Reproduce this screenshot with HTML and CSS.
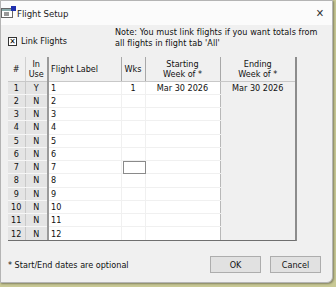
FILE: index.html
```html
<!DOCTYPE html>
<html>
<head>
<meta charset="utf-8">
<link rel="stylesheet" href="styles.css">
</head>
<body>
<div class="window">
  <div class="titlebar">
    <svg class="appicon" width="15" height="13" viewBox="0 0 15 13">
      <rect x="0.5" y="2.5" width="11" height="9" fill="#fff" stroke="#666"/>
      <rect x="1" y="3" width="10" height="2" fill="#8aa"/>
      <rect x="3" y="6" width="5" height="4" fill="#999"/>
      <rect x="10" y="0" width="5" height="5" fill="#1f2fae"/>
    </svg>
    <span class="title">Flight Setup</span>
    <span class="close">✕</span>
  </div>
  <div class="content">
    <div class="toprow">
      <label class="check"><span class="box">✕</span>Link Flights</label>
      <div class="note">Note: You must link flights if you want totals from<br>all flights in flight tab 'All'</div>
    </div>
    <div class="gridwrap">
      <table class="grid">
        <colgroup>
          <col class="c-num"><col class="c-use"><col class="c-lab"><col class="c-wks"><col class="c-st"><col class="c-en">
        </colgroup>
        <thead>
          <tr>
            <th class="hnum">#</th>
            <th class="huse">In<br>Use</th>
            <th class="hlab">Flight Label</th>
            <th>Wks</th>
            <th>Starting<br>Week of *</th>
            <th class="hen">Ending<br>Week of *</th>
          </tr>
        </thead>
        <tbody>
          <tr><td class="num">1</td><td class="use">Y</td><td class="lab">1</td><td class="wks">1</td><td class="st">Mar 30 2026</td><td class="en">Mar 30 2026</td></tr>
          <tr><td class="num">2</td><td class="use">N</td><td class="lab">2</td><td class="wks"></td><td class="st"></td><td class="en"></td></tr>
          <tr><td class="num">3</td><td class="use">N</td><td class="lab">3</td><td class="wks"></td><td class="st"></td><td class="en"></td></tr>
          <tr><td class="num">4</td><td class="use">N</td><td class="lab">4</td><td class="wks"></td><td class="st"></td><td class="en"></td></tr>
          <tr><td class="num">5</td><td class="use">N</td><td class="lab">5</td><td class="wks"></td><td class="st"></td><td class="en"></td></tr>
          <tr><td class="num">6</td><td class="use">N</td><td class="lab">6</td><td class="wks"></td><td class="st"></td><td class="en"></td></tr>
          <tr><td class="num">7</td><td class="use">N</td><td class="lab">7</td><td class="wks"><span class="focus"></span></td><td class="st"></td><td class="en"></td></tr>
          <tr><td class="num">8</td><td class="use">N</td><td class="lab">8</td><td class="wks"></td><td class="st"></td><td class="en"></td></tr>
          <tr><td class="num">9</td><td class="use">N</td><td class="lab">9</td><td class="wks"></td><td class="st"></td><td class="en"></td></tr>
          <tr><td class="num">10</td><td class="use">N</td><td class="lab">10</td><td class="wks"></td><td class="st"></td><td class="en"></td></tr>
          <tr><td class="num">11</td><td class="use">N</td><td class="lab">11</td><td class="wks"></td><td class="st"></td><td class="en"></td></tr>
          <tr><td class="num">12</td><td class="use">N</td><td class="lab">12</td><td class="wks"></td><td class="st"></td><td class="en"></td></tr>
        </tbody>
      </table>
    </div>
    <div class="footer">
      <span class="foot-note">* Start/End dates are optional</span>
      <div class="buttons">
        <button class="btn">OK</button>
        <button class="btn">Cancel</button>
      </div>
    </div>
  </div>
</div>
</body>
</html>
```

FILE: styles.css
```css
* { box-sizing: border-box; }
html, body { margin: 0; padding: 0; }
body {
  width: 336px;
  height: 287px;
  background: #c9c995;
  font-family: "DejaVu Sans Condensed", "DejaVu Sans", sans-serif;
  font-size: 9px;
  color: #111;
  overflow: hidden;
}
.window {
  width: 333px;
  height: 283px;
  background: #f0f0f0;
  border: 1px solid #b4b4b4;
  border-radius: 0 0 6px 0;
  box-shadow: 1px 1px 2px rgba(0,0,0,0.35);
  display: flex;
  flex-direction: column;
}
.titlebar {
  height: 24px;
  background: #fbfbfb;
  display: flex;
  align-items: center;
  padding: 0 8px 0 0;
}
.appicon { margin-top: -2px; }
.title {
  margin-left: 1px;
  font-family: "DejaVu Sans Condensed", "DejaVu Sans", sans-serif;
  font-size: 9.5px;
  color: #222;
}
.close {
  margin-left: auto;
  font-size: 11px;
  color: #333;
}
.content {
  flex: 1;
  display: flex;
  flex-direction: column;
  padding: 2px 0 0 7px;
}
.toprow {
  display: flex;
  height: 30px;
}
.check {
  display: flex;
  align-items: center;
  gap: 4px;
  margin-top: 9px;
  align-self: flex-start;
  height: 10px;
}
.box {
  width: 9px;
  height: 9px;
  border: 1px solid #333;
  background: #fff;
  font-size: 8px;
  font-weight: bold;
  line-height: 7px;
  text-align: center;
  color: #000;
}
.note {
  margin-left: 48px;
  line-height: 11px;
  color: #111;
  letter-spacing: 0.05px;
}
.gridwrap {
  width: 289px;
  border-right: 2px solid #8c8c8c;
  border-bottom: 1px solid #6f6f6f;
  height: 184px;
}
.grid {
  border-collapse: collapse;
  table-layout: fixed;
  width: 287px;
}
.c-num { width: 17px; }
.c-use { width: 23px; }
.c-lab { width: 73px; }
.c-wks { width: 24px; }
.c-st { width: 75px; }
.c-en { width: 75px; }
.grid th {
  height: 24px;
  font-weight: normal;
  background: #f0f0f0;
  border-right: 1px solid #a8a8a8;
  border-bottom: 1px solid #c8c8c8;
  line-height: 10px;
  padding: 0;
  text-align: center;
  vertical-align: middle;
}
.grid th.hnum { border-right-color: #d0d0d0; }
.grid th.huse { border-right: 2px solid #9a9a9a; }
.grid th.hlab { text-align: left; padding-left: 2px; }
.grid th.hen { border-right: none; }
.grid td {
  height: 13.25px;
  padding: 0;
  line-height: 12px;
  white-space: nowrap;
  border-bottom: 1px solid #f0f0f0;
  background: #fff;
}
.grid td.num {
  background: #e4e4e4;
  text-align: center;
  border-right: 1px solid #c9c9c9;
  border-bottom: 1px solid #f6f6f6;
}
.grid td.use {
  background: #e4e4e4;
  text-align: center;
  border-right: 2px solid #9a9a9a;
  border-bottom: 1px solid #f6f6f6;
}
.grid td.lab { padding-left: 2px; border-right: 1px solid #f0f0f0; }
.grid td.wks { text-align: center; border-right: 1px solid #f0f0f0; position: relative; }
.grid td.st { text-align: center; border-right: 1px solid #b8b8b8; }
.grid td.en { text-align: center; background: #f0f0f0; border-bottom: none; }
.grid tbody tr:last-child td { border-bottom: none; }
.focus {
  position: absolute;
  left: 1px;
  top: 0;
  width: 23px;
  height: 13px;
  border: 1px solid #8a8a8a;
}
.footer {
  flex: 1;
  display: flex;
  align-items: flex-start;
  padding-top: 15px;
  padding-right: 11px;
}
.foot-note { margin-top: 4px; }
.buttons {
  margin-left: auto;
  display: flex;
  gap: 9px;
}
.btn {
  width: 51px;
  height: 17px;
  background: #e1e1e1;
  border: 1px solid #adadad;
  font-family: inherit;
  font-size: 9px;
  color: #111;
  padding: 0;
}
```
